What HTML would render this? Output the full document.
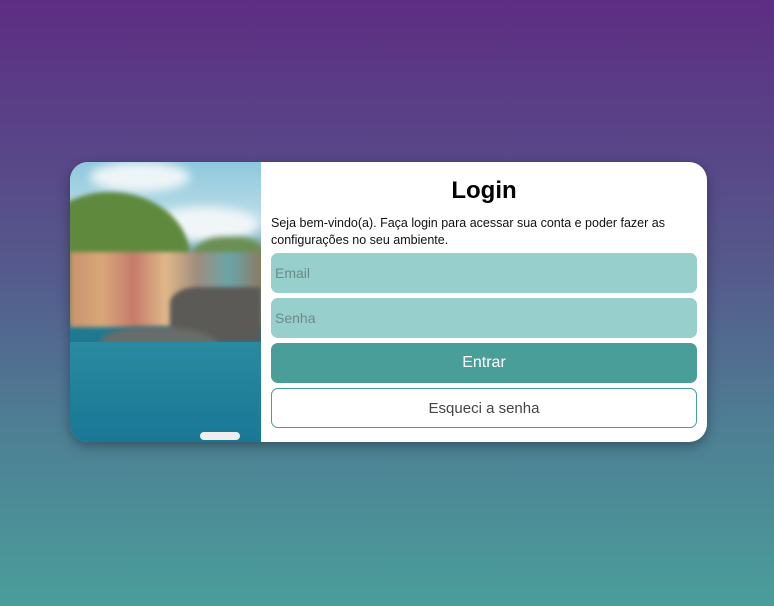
<!DOCTYPE html>
<html><head><meta charset="utf-8"><style>
html,body{margin:0;padding:0}
body{width:774px;height:606px;background:linear-gradient(180deg,#5d2d83 0%,#555a8c 45%,#4e7e94 70%,#4a9e9a 100%);font-family:"Liberation Sans",sans-serif;position:relative;overflow:hidden}
.card{position:absolute;left:70px;top:162px;width:637px;height:280px;background:#fff;border-radius:18px;overflow:hidden;box-shadow:0 4px 12px rgba(0,0,0,.35)}
.img{position:absolute;left:0;top:0;width:191px;height:280px;overflow:hidden;background:linear-gradient(180deg,#8ec8dc 0%,#b9dce8 20%,#7fb0c0 30%,#1e7a90 60%,#176f8a 100%)}
.img div{position:absolute}
h1{position:absolute;left:201px;width:426px;top:15px;margin:0;text-align:center;font-size:24px;font-weight:bold;color:#000}
p{position:absolute;left:201px;top:53px;width:430px;margin:0;font-size:12.5px;line-height:17px;color:#111}
.f{position:absolute;left:201px;width:426px;height:40px;border-radius:7px;box-sizing:border-box;font-size:14px;display:flex;align-items:center}
.in{background:#96cfcb;color:#6e8a88;padding-left:4px}
.btn{background:#4a9e9a;color:#fff;justify-content:center;font-size:16px}
.out{border:1px solid #4a9e9a;color:#444;justify-content:center;font-size:15px}
</style></head><body>
<div class="card">
 <div class="img">
  <div style="left:20px;top:0;width:100px;height:30px;background:#eef5f7;border-radius:50%;filter:blur(5px)"></div>
  <div style="left:80px;top:45px;width:110px;height:35px;background:#f0f6f8;border-radius:50%;filter:blur(5px)"></div>
  <div style="left:-40px;top:30px;width:160px;height:130px;background:#5f8a3e;border-radius:50% 50% 0 0;filter:blur(2px)"></div>
  <div style="left:120px;top:75px;width:80px;height:60px;background:#6b8f52;border-radius:40% 40% 0 0;filter:blur(3px)"></div>
  <div style="left:0;top:90px;width:191px;height:75px;background:linear-gradient(90deg,#c9926e,#d9a77a,#c57b6a,#e0b88a,#9f8c7e,#6aa5a8,#8c7a66);filter:blur(2px)"></div>
  <div style="left:100px;top:125px;width:91px;height:55px;background:#5b5a56;border-radius:30% 0 0 0;filter:blur(2px)"></div>
  <div style="left:30px;top:165px;width:120px;height:40px;background:#6a6c6a;border-radius:40% 50% 20% 20%;filter:blur(3px)"></div>
  <div style="left:0;top:180px;width:191px;height:100px;background:linear-gradient(180deg,#2a8aa0,#187896);"></div>
  <div style="left:130px;top:270px;width:40px;height:8px;background:#eee;border-radius:4px"></div>
 </div>
 <h1>Login</h1>
 <p>Seja bem-vindo(a). Faça login para acessar sua conta e poder fazer as configurações no seu ambiente.</p>
 <div class="f in" style="top:91px">Email</div>
 <div class="f in" style="top:136px">Senha</div>
 <div class="f btn" style="top:181px">Entrar</div>
 <div class="f out" style="top:226px">Esqueci a senha</div>
</div>
</body></html>
